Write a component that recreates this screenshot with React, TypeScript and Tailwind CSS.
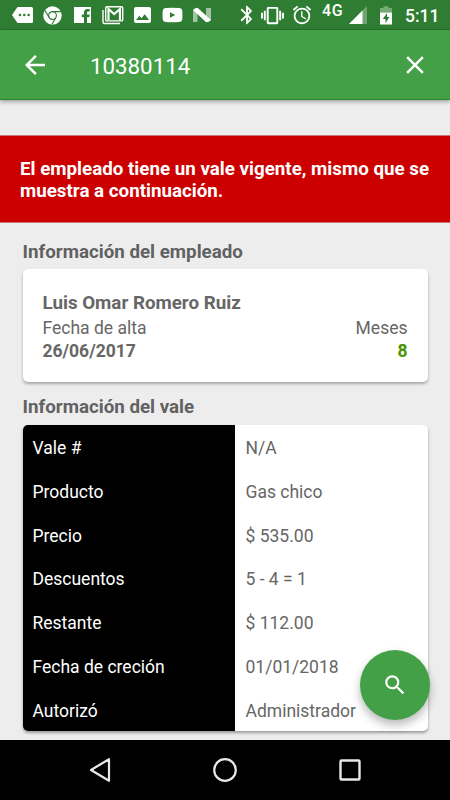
import type { ReactNode } from 'react';
import { MdAlarm, MdArrowBack, MdBluetooth, MdClose, MdSearch, MdVibration } from 'react-icons/md';

interface VoucherField {
  label: string;
  value: string;
}

const voucherFields: VoucherField[] = [
  { label: 'Vale #', value: 'N/A' },
  { label: 'Producto', value: 'Gas chico' },
  { label: 'Precio', value: '$ 535.00' },
  { label: 'Descuentos', value: '5 - 4 = 1' },
  { label: 'Restante', value: '$ 112.00' },
  { label: 'Fecha de creción', value: '01/01/2018' },
  { label: 'Autorizó', value: 'Administrador' },
];

function StatusBar() {
  return (
    <div className="h-[30px] flex items-center bg-[#2e7d32] text-white shadow-[inset_0_-1px_1px_#286e2b]">
      {/* Notifications */}
      <svg className="ml-3 shrink-0" width="22" height="18" viewBox="0 0 22 18">
        <path fill="currentColor" d="M5.5 1H19.5Q21 1 21 2.5V15.5Q21 17 19.5 17H5.5L0 9Z" />
        <g fill="#2e7d32">
          <circle cx="8" cy="9" r="1.3" />
          <circle cx="12.3" cy="9" r="1.3" />
          <circle cx="16.6" cy="9" r="1.3" />
        </g>
      </svg>
      <svg className="ml-[9px] shrink-0" width="19" height="19" viewBox="0 0 19 19">
        <circle cx="9.5" cy="9.5" r="9.2" fill="currentColor" />
        <g fill="none" stroke="#2e7d32" strokeWidth="1.1">
          <circle cx="9.5" cy="9.5" r="3.9" />
          <path d="M9.5 5.6H18M6.1 11.4L2 4.5M12.9 11.4L8.9 18.6" />
        </g>
      </svg>
      <svg className="ml-[11px] shrink-0" width="19" height="18" viewBox="0 0 19 18">
        <path fill="currentColor" d="M1 1H18V17H14V11.2H16.3L16.7 8.4H14V6.9C14 6 14.4 5.5 15.3 5.5H16.7V3H14.4C12.2 3 11 4.4 11 6.5V8.4H8.8V11.2H11V17H1Z" />
      </svg>
      <svg className="ml-2.5 shrink-0" width="22" height="20" viewBox="0 0 22 20">
        <path fill="none" stroke="currentColor" strokeWidth="1.4" d="M1 5V17Q1 18.5 2.5 18.5H18" />
        <rect x="3.7" y="1.7" width="17" height="14.2" rx="1.2" fill="none" stroke="currentColor" strokeWidth="1.4" />
        <path fill="none" stroke="currentColor" strokeWidth="2.1" d="M6.5 15V4L12.2 9L17.9 4V15" />
      </svg>
      <svg className="ml-2.5 shrink-0" width="17" height="18" viewBox="0 0 17 18">
        <path fill="currentColor" fillRule="evenodd" d="M2 1H15Q17 1 17 3V15Q17 17 15 17H2Q0 17 0 15V3Q0 1 2 1ZM2 14H15L10.7 8.3L7.5 12.2L5.4 9.8Z" />
      </svg>
      <svg className="ml-[11px] shrink-0" width="21" height="16" viewBox="0 0 21 16">
        <path fill="currentColor" fillRule="evenodd" d="M4 1Q10.5 .3 17 1Q20 1 20.3 4Q20.7 8 20.3 12Q20 15 17 15Q10.5 15.6 4 15Q1 15 .7 12Q.3 8 .7 4Q1 1 4 1ZM8 5.2V10.8L13.2 8Z" />
      </svg>
      <svg className="ml-2.5 shrink-0" width="18" height="16" viewBox="0 0 18 16">
        <path fill="currentColor" opacity=".55" d="M0 3L4.5 1V15H0ZM13 1H18V13L13 15Z" />
        <path fill="currentColor" d="M0 3Q2 .8 4.5 .8L18 13Q16 15.2 13.2 15.2Z" />
      </svg>

      {/* System indicators */}
      <MdBluetooth className="ml-[25px] shrink-0" size={22} />
      <MdVibration className="ml-[3px] shrink-0" size={23} />
      <MdAlarm className="ml-[7px] shrink-0" size={22} />
      <span className="ml-[9px] mb-[8px] w-[22px] text-[16px] leading-none font-medium tracking-[0.7px]">4G</span>
      <svg className="ml-[5px] shrink-0" width="18" height="20" viewBox="0 0 18 20">
        <path fill="currentColor" opacity=".3" d="M18 1V19H0Z" />
        <path fill="currentColor" d="M13.5 5.5V19H0Z" />
      </svg>
      <svg className="ml-[13px] shrink-0" width="12" height="19" viewBox="0 0 12 19">
        <path fill="currentColor" opacity=".35" d="M0 6.5V2H3.5V.3H8.5V2H12V6.5Z" />
        <path fill="currentColor" fillRule="evenodd" d="M0 6.5H12V18.5H0ZM7 7L2.8 13H5.5V17L9.5 11H7Z" />
      </svg>
      <span className="ml-[13px] pt-[3px] text-[17.5px] leading-none font-medium">5:11</span>
    </div>
  );
}

function SectionTitle({ children }: { children: ReactNode }) {
  return <h2 className="text-[18.75px] leading-[22px] font-bold text-[#616161]">{children}</h2>;
}

export default function App() {
  return (
    <div className="w-[450px] h-[800px] flex flex-col overflow-hidden bg-[#ededed] font-[Roboto,sans-serif]">
      <StatusBar />

      <header className="h-[70px] shrink-0 flex items-center bg-[#43a047] text-white border-b border-[#218c27] shadow-[0_2px_4px_rgba(0,0,0,0.3)]">
        <MdArrowBack className="ml-5 mt-px shrink-0" size={30} />
        <h1 className="ml-10 mt-[4px] text-[22.3px] leading-none">10380114</h1>
        <MdClose className="ml-auto mt-px mr-5 shrink-0" size={30} />
      </header>

      {/* Warning */}
      <div className="mt-[35px] h-[88px] shrink-0 px-5 pt-[22px] bg-[#cc0000] border-y border-[#cf7777] text-white text-[18.75px] leading-[22px] font-bold">
        <p className="whitespace-nowrap">El empleado tiene un vale vigente, mismo que se</p>
        <p>muestra a continuación.</p>
      </div>

      <main className="relative flex-1 px-[22.5px] pt-[18px]">
        <SectionTitle>Información del empleado</SectionTitle>
        <section className="mt-[6px] h-[113px] w-[405px] px-5 pt-[23px] rounded-[5px] bg-white text-[17.5px] leading-[24px] text-[#666666] shadow-[0_2px_3px_rgba(0,0,0,0.3)]">
          <p className="text-[18.75px] leading-[23px] font-bold">Luis Omar Romero Ruiz</p>
          <div className="flex justify-between pt-px">
            <span>Fecha de alta</span>
            <span>Meses</span>
          </div>
          <div className="-mt-px flex justify-between font-bold">
            <span>26/06/2017</span>
            <span className="text-[#4c9100]">8</span>
          </div>
        </section>

        <div className="mt-[14px]">
          <SectionTitle>Información del vale</SectionTitle>
        </div>
        <dl className="mt-[7px] w-[405px] h-[306px] flex flex-col rounded-[5px] overflow-hidden bg-white text-[17.5px] shadow-[0_2px_3px_rgba(0,0,0,0.35)]">
          {voucherFields.map((field) => (
            <div key={field.label} className="flex flex-1">
              <dt className="w-[212.5px] pl-2.5 pt-[3px] flex items-center bg-black text-white">{field.label}</dt>
              <dd className="pl-[10.5px] pt-[3px] flex items-center text-[#666666]">{field.value}</dd>
            </div>
          ))}
        </dl>

        <button className="absolute right-5 bottom-5 size-[70px] flex items-center justify-center rounded-full bg-[#43a047] text-white shadow-[0_5px_10px_rgba(0,0,0,0.28)]">
          <MdSearch size={26} />
        </button>
      </main>

      <nav className="h-[60px] shrink-0 flex items-center justify-center gap-[101px] bg-black text-[#e8e8e8]">
        <svg width="24" height="26" viewBox="0 0 24 26">
          <path fill="none" stroke="currentColor" strokeWidth="2.2" strokeLinejoin="round" d="M21 2.2V23.800L3 13Z" />
        </svg>
        <svg width="24" height="24" viewBox="0 0 24 24">
          <circle cx="12" cy="12" r="10.8" fill="none" stroke="currentColor" strokeWidth="2.2" />
        </svg>
        <svg width="24" height="24" viewBox="0 0 24 24">
          <rect x="2.5" y="2.5" width="19" height="19" rx="1" fill="none" stroke="currentColor" strokeWidth="2.4" />
        </svg>
      </nav>
    </div>
  );
}
